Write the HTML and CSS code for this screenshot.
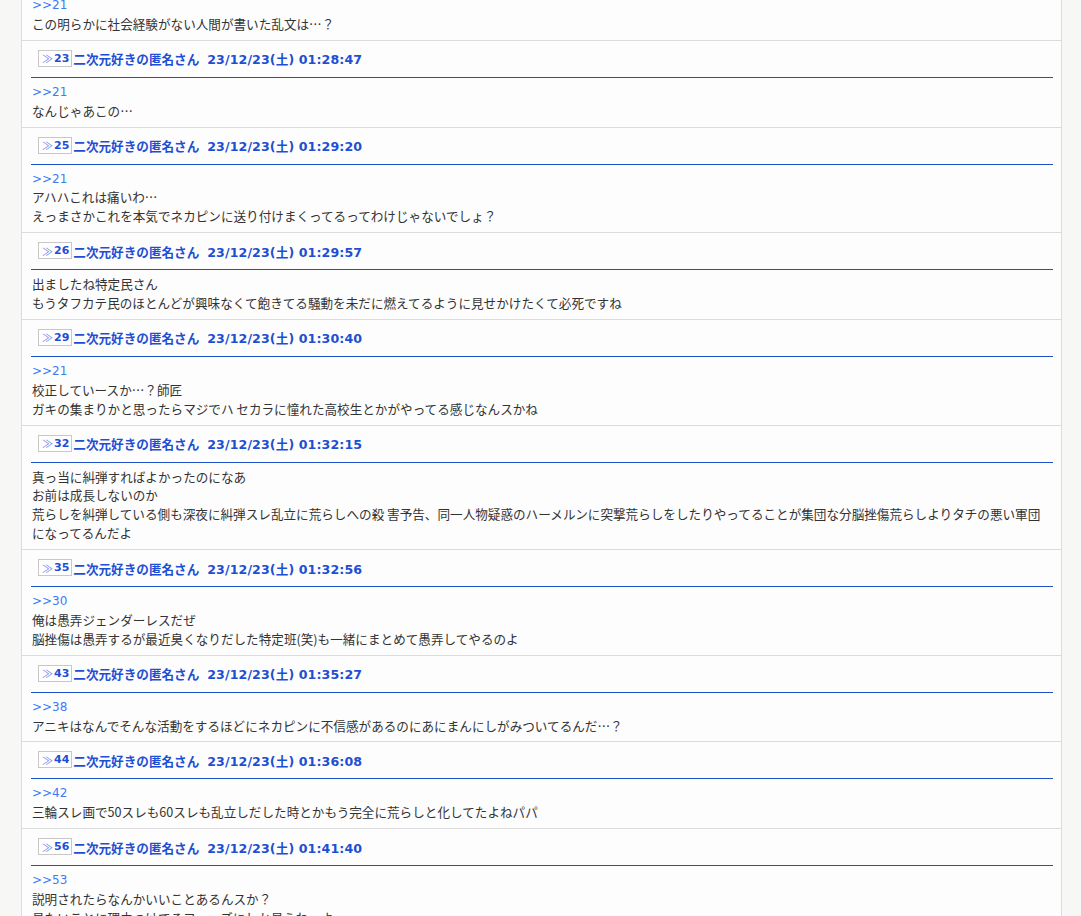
FILE: index.html
```html
<!DOCTYPE html>
<html lang="ja">
<head>
<meta charset="UTF-8">
<title>二次元好きの匿名さん スレッド</title>
<link rel="stylesheet" href="styles.css">
</head>
<body>

<div class="thread">

<article class="post first">
<div class="body">
<a class="anchor">&gt;&gt;21</a>
この明らかに社会経験がない人間が書いた乱文は…？
</div>
</article>

<article class="post">
<div class="head"><span class="no"><i>≫</i>23</span><span class="name">二次元好きの匿名さん</span><span class="date">23/12/23(土) 01:28:47</span></div>
<div class="body">
<a class="anchor">&gt;&gt;21</a>
なんじゃあこの…
</div>
</article>

<article class="post">
<div class="head"><span class="no"><i>≫</i>25</span><span class="name">二次元好きの匿名さん</span><span class="date">23/12/23(土) 01:29:20</span></div>
<div class="body">
<a class="anchor">&gt;&gt;21</a>
アハハこれは痛いわ…<br>
えっまさかこれを本気でネカピンに送り付けまくってるってわけじゃないでしょ？
</div>
</article>

<article class="post">
<div class="head"><span class="no"><i>≫</i>26</span><span class="name">二次元好きの匿名さん</span><span class="date">23/12/23(土) 01:29:57</span></div>
<div class="body">
出ましたね特定民さん<br>
もうタフカテ民のほとんどが興味なくて飽きてる騒動を未だに燃えてるように見せかけたくて必死ですね
</div>
</article>

<article class="post">
<div class="head"><span class="no"><i>≫</i>29</span><span class="name">二次元好きの匿名さん</span><span class="date">23/12/23(土) 01:30:40</span></div>
<div class="body">
<a class="anchor">&gt;&gt;21</a>
校正していースか…？師匠<br>
ガキの集まりかと思ったらマジでハ セカラに憧れた高校生とかがやってる感じなんスかね
</div>
</article>

<article class="post">
<div class="head"><span class="no"><i>≫</i>32</span><span class="name">二次元好きの匿名さん</span><span class="date">23/12/23(土) 01:32:15</span></div>
<div class="body">
真っ当に糾弾すればよかったのになあ<br>
お前は成長しないのか<br>
荒らしを糾弾している側も深夜に糾弾スレ乱立に荒らしへの殺 害予告、同一人物疑惑のハーメルンに突撃荒らしをしたりやってることが集団な分脳挫傷荒らしよりタチの悪い軍団になってるんだよ
</div>
</article>

<article class="post">
<div class="head"><span class="no"><i>≫</i>35</span><span class="name">二次元好きの匿名さん</span><span class="date">23/12/23(土) 01:32:56</span></div>
<div class="body">
<a class="anchor">&gt;&gt;30</a>
俺は愚弄ジェンダーレスだぜ<br>
脳挫傷は愚弄するが最近臭くなりだした特定班(笑)も一緒にまとめて愚弄してやるのよ
</div>
</article>

<article class="post">
<div class="head"><span class="no"><i>≫</i>43</span><span class="name">二次元好きの匿名さん</span><span class="date">23/12/23(土) 01:35:27</span></div>
<div class="body">
<a class="anchor">&gt;&gt;38</a>
アニキはなんでそんな活動をするほどにネカピンに不信感があるのにあにまんにしがみついてるんだ…？
</div>
</article>

<article class="post">
<div class="head"><span class="no"><i>≫</i>44</span><span class="name">二次元好きの匿名さん</span><span class="date">23/12/23(土) 01:36:08</span></div>
<div class="body">
<a class="anchor">&gt;&gt;42</a>
三輪スレ画で50スレも60スレも乱立しだした時とかもう完全に荒らしと化してたよねパパ
</div>
</article>

<article class="post">
<div class="head"><span class="no"><i>≫</i>56</span><span class="name">二次元好きの匿名さん</span><span class="date">23/12/23(土) 01:41:40</span></div>
<div class="body">
<a class="anchor">&gt;&gt;53</a>
説明されたらなんかいいことあるんスか？<br>
見たいことに理由つけてるフェーズにしか見えわ…よ
</div>
</article>

</div>

</body>
</html>
```

FILE: styles.css
```css
html,body{margin:0;height:100%;overflow:hidden}
body{background:#f7f7f6;font-family:"Noto Sans CJK JP","Noto Sans",sans-serif;font-size:12.6px;color:#333}
.thread{margin:0 19px 0 21px;background:#fdfdfd;border-left:1px solid #dcdcdc;border-right:1px solid #dcdcdc;min-height:100%}
.post{border-top:1px solid #dcdcdc;padding:0 8px 0 9px}
.post.first{border-top:none;margin-top:-9px}
.head{display:flex;align-items:center;height:36px;padding-left:7px;border-bottom:1px solid #1d4fc9;font-weight:700;color:#1d4fd4;white-space:nowrap}
.no{display:inline-flex;align-items:center;height:15px;padding:0 2px 0 3px;border:1px solid #c8c8c8;background:#fff;font-family:"DejaVu Sans","Noto Sans CJK JP",sans-serif;font-size:11px;margin-top:-1px}
.no i{font-style:normal;color:#6f87f0;font-weight:400;font-family:"Noto Sans CJK JP",sans-serif;margin-right:1px}
.name{margin-left:1px}
.date{margin-left:8px;font-family:"DejaVu Sans","Noto Sans CJK JP",sans-serif;letter-spacing:0.1px}
.body{padding:5px 1px 6px;line-height:18.875px}
.anchor{display:block;height:18.875px;overflow:hidden;color:#3b7bf5;font-family:"DejaVu Sans",sans-serif;font-size:12px;text-decoration:none}
```
